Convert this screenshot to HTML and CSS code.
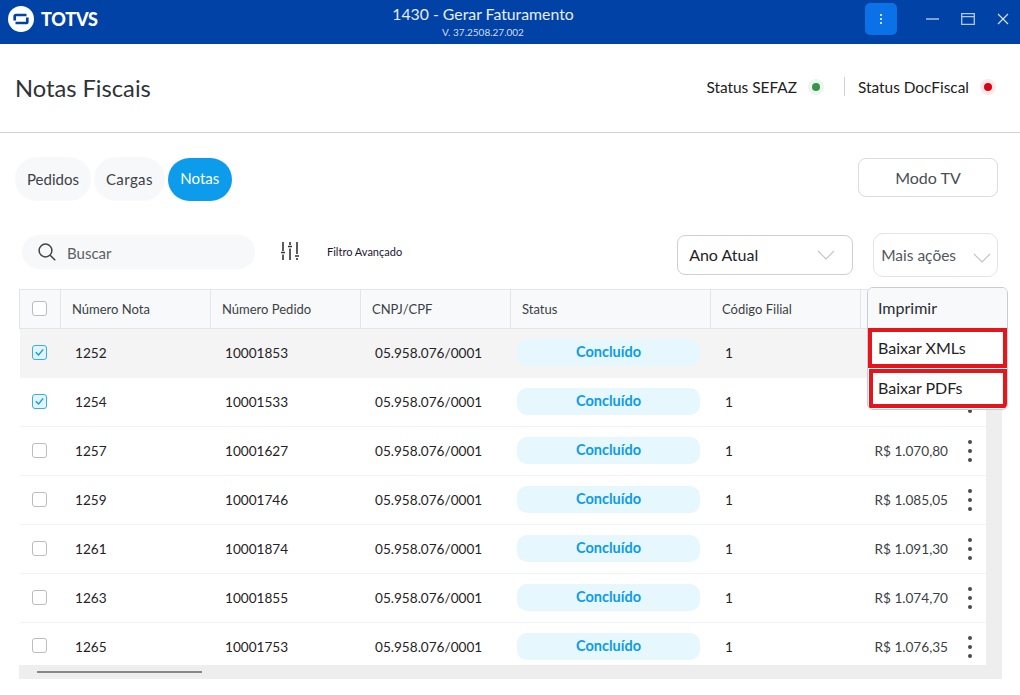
FILE: index.html
```html
<!DOCTYPE html>
<html lang="pt-BR">
<head>
<meta charset="utf-8">
<title>Notas Fiscais</title>
<link rel="stylesheet" href="styles.css">
</head>
<body>
<header class="titlebar">
  <div class="brand">
    <svg class="brand-mark" viewBox="0 0 26 26" width="26" height="26"><circle cx="13" cy="13" r="13" fill="#fff"/><path d="M18.500 9H8q-1.300 0-1.300 1.300V14.500M7.500 17H18q1.300 0 1.300-1.300V11.500" fill="none" stroke="#0042a6" stroke-width="2.700"/></svg>
    <span class="brand-name">TOTVS</span>
  </div>
  <div class="app-title">
    <div class="app-name">1430 - Gerar Faturamento</div>
    <div class="app-version">V. 37.2508.27.002</div>
  </div>
  <div class="window-actions">
    <button class="kebab-btn"><svg viewBox="0 0 4 12" width="4" height="12"><g fill="#cfe0f7"><rect x="1" y="1" width="2" height="2"/><rect x="1" y="5" width="2" height="2"/><rect x="1" y="9" width="2" height="2"/></g></svg></button>
    <svg class="win-min" viewBox="0 0 14 14" width="14" height="14"><path d="M0 7h13" stroke="#b4c7e6" stroke-width="1.4"/></svg>
    <svg class="win-max" viewBox="0 0 14 12" width="14" height="12"><path d="M.7.7h12.600v10.600H.7zM.7 3.600h12.600" fill="none" stroke="#b4c7e6" stroke-width="1.3"/></svg>
    <svg class="win-close" viewBox="0 0 12 12" width="12" height="12"><path d="M1 1l10 10M11 1L1 11" stroke="#dde6f5" stroke-width="1.1"/></svg>
  </div>
</header>

<section class="page-head">
  <h1 class="page-title">Notas Fiscais</h1>
  <div class="statuses">
    <span class="status-item">Status SEFAZ<i class="dot dot-green"></i></span>
    <span class="status-sep"></span>
    <span class="status-item">Status DocFiscal<i class="dot dot-red"></i></span>
  </div>
</section>

<main class="content">
  <div class="tabs-row">
    <div class="tabs">
      <span class="tab">Pedidos</span>
      <span class="tab tab-wide">Cargas</span>
      <span class="tab tab-active">Notas</span>
    </div>
    <button class="tv-btn">Modo TV</button>
  </div>

  <div class="filters-row">
    <div class="search">
      <svg viewBox="0 0 20 20" width="20" height="20"><circle cx="8.500" cy="8.500" r="6.400" fill="none" stroke="#444" stroke-width="1.5"/><path d="M13.200 13.200l5 5" stroke="#444" stroke-width="1.6"/></svg>
      <span class="search-text">Buscar</span>
    </div>
    <svg class="filter-icon" viewBox="0 0 20 20" width="20" height="20"><g stroke="#333" stroke-width="1.6" fill="none"><path d="M3 1v9M3 13.500v5.500M1 11.500h4M10 1v3M10 7.500v11.500M8 5.500h4M17 1v12M17 17v2M15 15h4"/></g></svg>
    <span class="filter-link">Filtro Avançado</span>
    <div class="select select-year">Ano Atual<svg viewBox="0 0 18 10" width="18" height="10"><path d="M1 1l8 8 8-8" fill="none" stroke="#bcc3cc" stroke-width="1.1"/></svg></div>
    <div class="select select-more">Mais ações<svg viewBox="0 0 18 10" width="18" height="10"><path d="M1 1l8 8 8-8" fill="none" stroke="#bcc3cc" stroke-width="1.1"/></svg></div>
  </div>

  <div class="table-wrap">
    <div class="table-inner">
      <table class="grid">
        <colgroup>
          <col class="c-check"><col class="c-150"><col class="c-150"><col class="c-150"><col class="c-200"><col class="c-150"><col class="c-value"><col class="c-menu">
        </colgroup>
        <thead>
          <tr>
            <th><span class="check"></span></th>
            <th>Número Nota</th><th>Número Pedido</th><th>CNPJ/CPF</th><th>Status</th><th>Código Filial</th><th></th><th></th>
          </tr>
        </thead>
        <tbody>
          <tr class="row-hover"><td><span class="check check-on"><svg viewBox="0 0 14 14" width="14" height="14"><path d="M3 7.200l3 3 5-6" fill="none" stroke="#0c9ceb" stroke-width="1.500"/></svg></span></td><td class="id">1252</td><td class="id">10001853</td><td class="id">05.958.076/0001</td><td class="st"><span class="pill">Concluído</span></td><td class="id">1</td><td class="val"></td><td></td></tr>
          <tr><td><span class="check check-on"><svg viewBox="0 0 14 14" width="14" height="14"><path d="M3 7.200l3 3 5-6" fill="none" stroke="#0c9ceb" stroke-width="1.500"/></svg></span></td><td class="id">1254</td><td class="id">10001533</td><td class="id">05.958.076/0001</td><td class="st"><span class="pill">Concluído</span></td><td class="id">1</td><td class="val"></td><td class="menu"><i class="kebab"></i></td></tr>
          <tr><td><span class="check"></span></td><td class="id">1257</td><td class="id">10001627</td><td class="id">05.958.076/0001</td><td class="st"><span class="pill">Concluído</span></td><td class="id">1</td><td class="val">R$ 1.070,80</td><td class="menu"><i class="kebab"></i></td></tr>
          <tr><td><span class="check"></span></td><td class="id">1259</td><td class="id">10001746</td><td class="id">05.958.076/0001</td><td class="st"><span class="pill">Concluído</span></td><td class="id">1</td><td class="val">R$ 1.085,05</td><td class="menu"><i class="kebab"></i></td></tr>
          <tr><td><span class="check"></span></td><td class="id">1261</td><td class="id">10001874</td><td class="id">05.958.076/0001</td><td class="st"><span class="pill">Concluído</span></td><td class="id">1</td><td class="val">R$ 1.091,30</td><td class="menu"><i class="kebab"></i></td></tr>
          <tr><td><span class="check"></span></td><td class="id">1263</td><td class="id">10001855</td><td class="id">05.958.076/0001</td><td class="st"><span class="pill">Concluído</span></td><td class="id">1</td><td class="val">R$ 1.074,70</td><td class="menu"><i class="kebab"></i></td></tr>
          <tr><td><span class="check"></span></td><td class="id">1265</td><td class="id">10001753</td><td class="id">05.958.076/0001</td><td class="st"><span class="pill">Concluído</span></td><td class="id">1</td><td class="val">R$ 1.076,35</td><td class="menu"><i class="kebab"></i></td></tr>
        </tbody>
      </table>
      <div class="vscroll"></div>
    </div>
    <div class="hscroll"><span class="hthumb"></span></div>

    <div class="dropdown">
      <div class="drop-head">Imprimir</div>
      <div class="drop-item">Baixar XMLs</div>
      <div class="drop-item drop-item-2">Baixar PDFs</div>
    </div>
  </div>
</main>
</body>
</html>
```

FILE: styles.css
```css
* { box-sizing: border-box; }
html, body { margin: 0; height: 100%; }
body {
  width: 1020px;
  height: 695px;
  overflow: hidden;
  background: #fff;
  font-family: Lato, "Liberation Sans", sans-serif;
  color: #1f2226;
}

/* title bar */
.titlebar {
  height: 44px;
  background: #0042a6;
  display: flex;
  align-items: center;
  color: #fff;
}
.brand {
  width: 200px;
  padding-left: 8px;
  display: flex;
  align-items: center;
  gap: 7px;
}
.brand-mark { margin-top: -6px; }
.brand-name {
  font-size: 18px;
  font-weight: 900;
  line-height: 26px;
  margin-top: -6px;
  letter-spacing: -.2px;
}
.app-title { flex: 1; text-align: center; }
.app-name { font-size: 15.800px; line-height: 18px; margin-top: -1px; color: #e8eef8; }
.app-version { font-size: 10px; line-height: 14px; margin-top: 2px; color: #d3def0; }
.window-actions {
  width: 254px;
  padding-left: 99px;
  display: flex;
  align-items: center;
}
.kebab-btn {
  width: 32px;
  height: 32px;
  margin-top: -6px;
  padding: 0;
  border: 0;
  border-radius: 5px;
  background: #0b71e6;
  display: flex;
  align-items: center;
  justify-content: center;
}
.win-min { margin-left: 29px; margin-top: -6px; }
.win-max { margin-left: 21px; margin-top: -6px; }
.win-close { margin-left: 22px; margin-top: -6px; }

/* page head */
.page-head {
  height: 89px;
  border-bottom: 1px solid #ced3db;
  padding: 0 24px 0 15px;
  display: flex;
  align-items: center;
  justify-content: space-between;
}
.page-title {
  margin: -1px 0 0;
  font-size: 23.700px;
  font-weight: 400;
  color: #2f3338;
}
.statuses { display: flex; align-items: center; margin-top: -3px; }
.status-item {
  font-size: 15.400px;
  display: flex;
  align-items: center;
  gap: 11px;
  color: #1d2024;
}
.status-sep { width: 1px; height: 19px; background: #ced3db; margin: 0 13px 0 20px; }
.dot { width: 16px; height: 16px; border-radius: 50%; display: block; position: relative; }
.dot::after {
  content: "";
  position: absolute;
  left: 4px;
  top: 4px;
  width: 8px;
  height: 8px;
  border-radius: 50%;
}
.dot-green { background: #ecf5ee; }
.dot-green::after { background: #37944f; }
.dot-red { background: #fbe9ea; }
.dot-red::after { background: #d90414; }

/* content */
.content { padding: 0 0 0 15px; }
.tabs-row {
  height: 102px;
  padding: 25px 22px 0 0;
  display: flex;
  justify-content: space-between;
  align-items: flex-start;
}
.tabs { display: flex; gap: 3px; margin-top: -1px; }
.tab {
  height: 44px;
  line-height: 44px;
  padding: 0 12px;
  border-radius: 22px;
  background: #f7f8fa;
  font-size: 15px;
  color: #3d4147;
}
.tab-wide { letter-spacing: .4px; }
.tab-active {
  height: 43px;
  line-height: 41px;
  margin-top: 1px;
  padding: 0 12.500px;
  background: #0c9ceb;
  color: #fff;
}
.tv-btn {
  width: 140px;
  height: 39px;
  border: 1px solid #d9dce1;
  border-radius: 8px;
  background: #fff;
  font: 400 16px Lato, sans-serif;
  color: #4a4e54;
}

.filters-row {
  height: 54px;
  display: flex;
  align-items: flex-start;
  position: relative;
}
.search {
  margin-left: 7px;
  width: 233px;
  height: 34px;
  border-radius: 17px;
  background: #f7f8fa;
  display: flex;
  align-items: center;
  gap: 10px;
  padding-left: 15px;
  font-size: 16px;
  color: #5c6066;
}
.search-text { font-size: 15px; margin-top: 1px; }
.filter-icon { margin: 6px 0 0 25px; }
.filter-link {
  margin: 9px 0 0 27px;
  font-size: 11px;
  line-height: 16px;
  color: #1c1530;
}
.select {
  height: 40px;
  border: 1px solid #ccd0d6;
  border-radius: 8px;
  display: flex;
  align-items: center;
  justify-content: space-between;
  font-size: 16px;
}
.select-year {
  width: 176px;
  margin: 0 0 0 275px;
  padding: 0 17px 1px 11px;
  color: #1f2226;
}
.select-year svg { margin-top: 1px; }
.select-more {
  width: 125px;
  height: 44px;
  margin: -2px 0 0 20px;
  padding: 0 6px 0 7px;
  border-color: #e2e4ea;
  border-radius: 10px;
  font-size: 15.500px;
  color: #53575d;
}
.select-more svg { margin-top: 6px; }

/* table */
.table-wrap {
  position: relative;
  width: 983px;
  margin-left: 4px;
  background: #eee;
}
.table-inner { display: flex; align-items: flex-start; }
.grid {
  width: 966px;
  table-layout: fixed;
  border-collapse: collapse;
  background: #fff;
  font-size: 13.600px;
}
.c-check { width: 41px; }
.c-150 { width: 150px; }
.c-200 { width: 200px; }
.c-value { width: 100px; }
.c-menu { width: 25px; }
.grid th {
  height: 39px;
  background: #f8f9fb;
  border: 1px solid #e3e5e9;
  padding: 0 0 0 11px;
  text-align: left;
  font-size: 13px;
  font-weight: 400;
  color: #3b3f45;
}
.grid th:first-child { padding: 0 1px 0 0; }
.grid td {
  height: 49px;
  padding: 0;
  border-bottom: 1px solid #f1f3f6;
}
.grid tbody tr:last-child td { height: 42px; padding-top: 6px; border-bottom: 0; }
.grid td:first-child { padding-right: 1px; }
.row-hover td { background: #f4f4f4; border-bottom-color: #f4f4f4; }
.grid .id { padding-left: 14.500px; color: #1f2226; }
.grid .st { padding-left: 6px; }
.pill {
  display: block;
  width: 183px;
  height: 27px;
  margin-top: -1px;
  line-height: 26px;
  border-radius: 10px;
  background: #e7f7fe;
  color: #0c9ceb;
  font-weight: 700;
  font-size: 14.500px;
  text-align: center;
  text-indent: 1px;
}
.grid .val { padding-left: 14px; color: #3b3f45; white-space: nowrap; }
.kebab {
  display: block;
  width: 4px;
  height: 4px;
  margin-left: 7px;
  border-radius: 50%;
  background: #4a4a4a;
  box-shadow: 0 -9px 0 #4a4a4a, 0 9px 0 #4a4a4a;
}
.check {
  display: flex;
  width: 15px;
  height: 15px;
  margin: -2px auto 0;
  border: 1px solid #b9bcc1;
  border-radius: 3px;
  background: #fff;
  align-items: center;
  justify-content: center;
}
.check-on { border-color: #35aef0; background: #e3f4fe; }
.vscroll { flex: 1; }
.hscroll { height: 14px; background: #eee; padding: 6px 0 0 18px; }
.hthumb { display: block; width: 165px; height: 2px; background: #868686; }

/* dropdown menu */
.dropdown {
  position: absolute;
  left: 848px;
  top: -2px;
  width: 141px;
  height: 123px;
  background: #fff;
  border: 1px solid #c9ccd1;
  border-radius: 6px;
  font-size: 16px;
  color: #1f2226;
  overflow: hidden;
}
.drop-head {
  height: 40px;
  line-height: 40px;
  padding-left: 10px;
  background: #f8f9fb;
  color: #2a2d32;
}
.drop-item {
  height: 40px;
  line-height: 32px;
  padding-left: 6px;
  border: 4px solid #e5151c;
  background: #fff;
}
.drop-item-2 { margin: 1px 0 0 1px; padding-left: 5px; line-height: 30px; height: 39px; }
```
